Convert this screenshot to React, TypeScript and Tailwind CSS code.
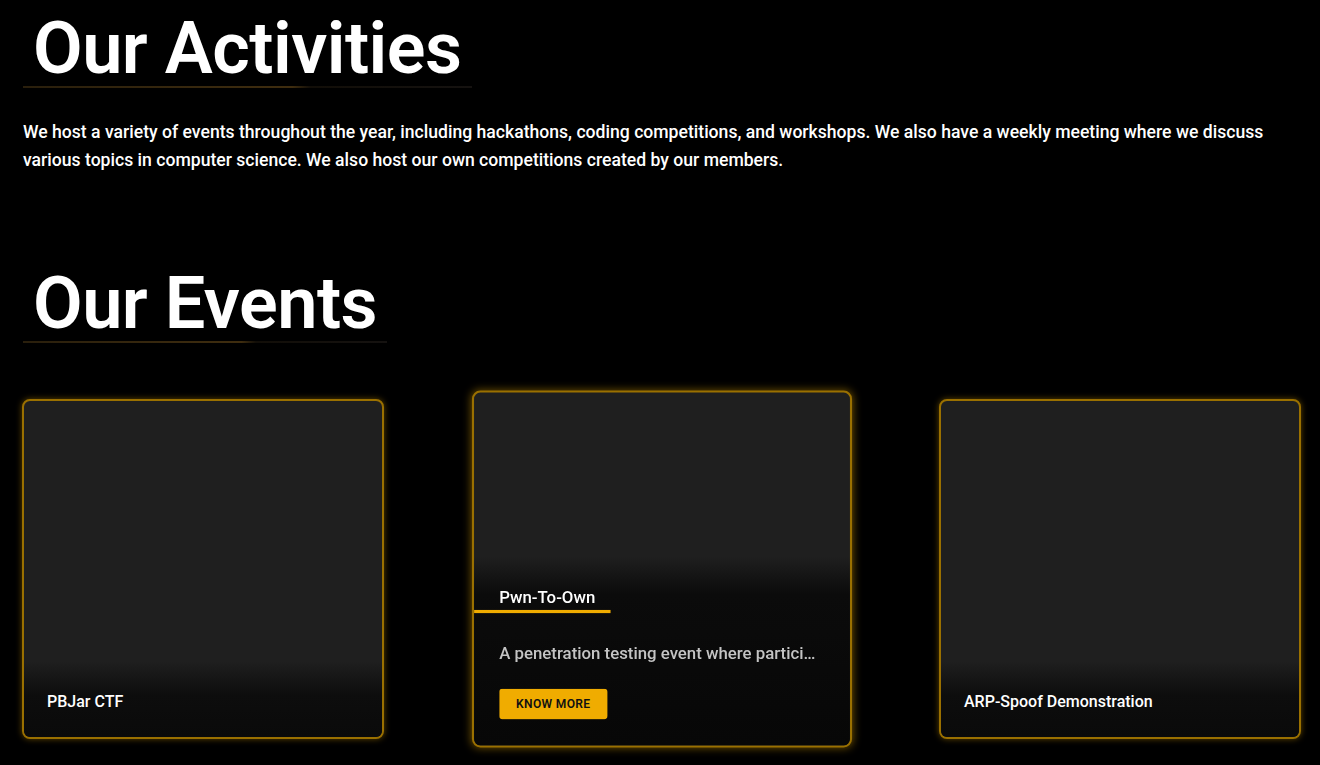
import React from "react";

type EventCard = {
  title: string;
  description: string;
  active?: boolean;
};

const events: EventCard[] = [
  { title: "PBJar CTF", description: "A capture the flag competition hosted by our members." },
  {
    title: "Pwn-To-Own",
    description: "A penetration testing event where participants attempt to exploit devices.",
    active: true,
  },
  { title: "ARP-Spoof Demonstration", description: "A live demonstration of ARP spoofing attacks." },
];

const Heading = ({ children }: { children: React.ReactNode }) => (
  <div className="inline-flex flex-col pt-[13px]">
    <h2 className="px-[10px] text-[72px] leading-[72px] font-semibold text-white tracking-[-0.5px]">
      {children}
    </h2>
    <div className="mt-[1px] h-[2px] bg-[linear-gradient(90deg,#2a1f0c_0%,#3f2d0f_60%,#120e08_64%,#151210_100%)]" />
  </div>
);

const Card = ({ event }: { event: EventCard }) => (
  <div
    className={
      event.active
        ? "relative h-[340px] w-[362px] scale-[1.05] overflow-hidden rounded-[8px] border-2 border-[#9a7000] bg-[#1f1f1f] shadow-[0_0_8px_rgba(240,172,0,0.45)]"
        : "relative h-[340px] w-[362px] overflow-hidden rounded-[8px] border-2 border-[#9a7000] bg-[#1f1f1f] shadow-[0_0_6px_rgba(240,172,0,0.4)]"
    }
  >
    {event.active ? (
      <div className="absolute inset-x-0 bottom-0 h-[180px] bg-[linear-gradient(180deg,rgba(10,10,10,0)_0%,#0b0b0b_20%,#070707_100%)]">
        <div className="pt-[29px]">
          <div className="w-[130px] border-b-[3px] border-[#f0ac00] pb-[2px] pl-[24px] text-[16px] leading-[20px] font-medium text-white">
            {event.title}
          </div>
          <p className="mt-[28px] truncate pl-[24px] pr-[28px] text-[16px] leading-[22px] font-medium text-[#c4c4c4]">
            {event.description}
          </p>
          <button className="ml-[24px] mt-[22px] h-[29px] rounded-[3px] bg-[#f0ac00] px-[16px] text-[11.5px] font-semibold tracking-[0.3px] text-[#111]">
            KNOW MORE
          </button>
        </div>
      </div>
    ) : (
      <div className="absolute inset-x-0 bottom-0 h-[76px] bg-[linear-gradient(180deg,rgba(10,10,10,0)_0%,#0d0d0d_45%,#0a0a0a_100%)] pl-[23px]">
        <span className="absolute bottom-[25px] text-[16px] leading-[20px] font-medium text-white">
          {event.title}
        </span>
      </div>
    )}
  </div>
);

export default function App() {
  return (
    <div className="min-h-[765px] w-[1320px] overflow-hidden bg-black px-[23px] font-['Roboto',sans-serif]">
      <section>
        <Heading>Our Activities</Heading>
        <p className="mt-[30px] text-[17.6px] leading-[28px] font-medium text-white">
          We host a variety of events throughout the year, including hackathons, coding competitions, and workshops. We
          also have a weekly meeting where we discuss various topics in computer science. We also host our own
          competitions created by our members.
        </p>
      </section>
      <section className="mt-[81px]">
        <Heading>Our Events</Heading>
        <div className="-ml-[1px] mt-[56px] flex w-[1279px] justify-between">
          {events.map((e) => (
            <Card key={e.title} event={e} />
          ))}
        </div>
      </section>
    </div>
  );
}
